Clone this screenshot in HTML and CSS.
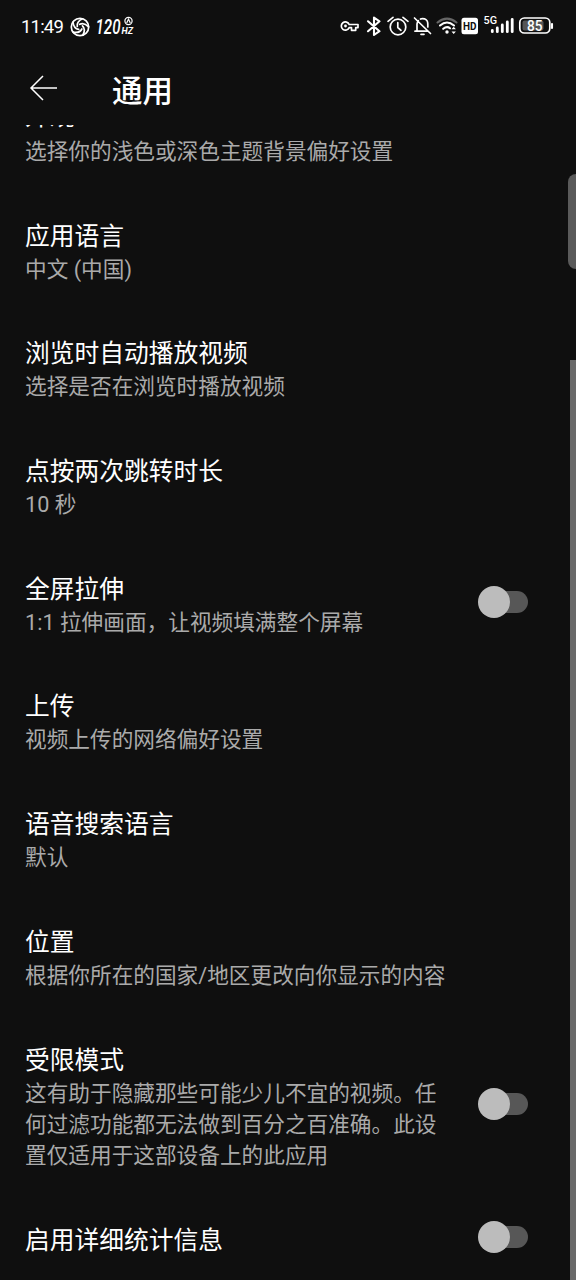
FILE: index.html
```html
<!DOCTYPE html>
<html lang="zh-CN">
<head>
<meta charset="utf-8">
<title>通用</title>
<link rel="stylesheet" href="styles.css">
</head>
<body>
<div class="screen">
  <header class="status">
    <div class="status-left">
      <span class="time">11:49</span>
      <svg class="icon aperture" width="20" height="20" viewBox="0 0 20 20">
        <circle cx="10" cy="10" r="8.700"/>
        <path d="M12.500 1.800Q6.500 4.500 7.300 9.500"/><path d="M12.500 1.800Q6.500 4.500 7.300 9.500" transform="rotate(72 10 10)"/><path d="M12.500 1.800Q6.500 4.500 7.300 9.500" transform="rotate(144 10 10)"/><path d="M12.500 1.800Q6.500 4.500 7.300 9.500" transform="rotate(216 10 10)"/><path d="M12.500 1.800Q6.500 4.500 7.300 9.500" transform="rotate(288 10 10)"/>
      </svg>
      <svg class="rate" width="40" height="22" viewBox="0 0 40 22">
        <text class="rate-num" x="0.500" y="18.500" textLength="25" lengthAdjust="spacingAndGlyphs">120</text>
        <text class="rate-unit" x="26.500" y="18.500" textLength="11.500" lengthAdjust="spacingAndGlyphs">HZ</text>
        <circle class="rate-ring" cx="33.500" cy="6" r="3.600"/>
        <path class="rate-ring" d="M31.700 8.100L33.500 4.100L35.300 8.100"/>
      </svg>
    </div>
    <svg class="icon status-right" width="216" height="24" viewBox="340 14 216 24">
      <path d="M349.200 24.500A4.100 4.100 0 1 0 349.200 27.600H351.500V30.300H355.700V27.600H358V24.500Z"/>
      <circle class="solid" cx="345.500" cy="26" r="1.400"/>
      <path class="bold" d="M368 21.300L379.500 31.200L374 35V17.500L379.500 21.300L368 31.200"/>
      <circle cx="398" cy="27" r="7.800"/>
      <path d="M397.800 22.700V27.500L401 30.300M388 21.300L393 17.300M408 21.300L403 17.300"/>
      <path d="M415 31.200H427.500M417 31.200V24Q417.200 22 418.300 20.700M420.500 19Q422 18.200 424.500 18.800Q427.800 20 427.800 24V27M414.500 18L430.500 33.500M421 34.300H424"/>
      <path class="dim" d="M437.500 22.500Q447 14.800 456.500 22.500"/>
      <path class="bold" d="M440 25.500Q447 19.500 454 25.500M443.200 28.800Q447 25.700 450 28.300"/>
      <circle class="solid" cx="447" cy="32" r="1.700"/>
      <path class="solid" d="M451.500 29.300L453.700 26.700L455.900 29.300ZM451.500 31.500L453.700 34.100L455.900 31.500Z"/>
      <rect class="solid" x="461.500" y="17.800" width="16.500" height="16.500" rx="2.500"/>
      <text class="hd" x="463" y="30" textLength="13.500" lengthAdjust="spacingAndGlyphs">HD</text>
      <text class="net" x="483.500" y="24.200" textLength="13.500" lengthAdjust="spacingAndGlyphs">5G</text>
      <path class="bars" d="M492.300 30.500V31.700M497.300 28V31.700M502.300 25V31.700M507.300 22V31.700M512.200 19.300V31.700"/>
      <rect x="519.800" y="18" width="30" height="15" rx="4.500"/>
      <rect class="charge" x="522.500" y="20.500" width="21" height="10" rx="2"/>
      <path class="bold" d="M552 24V28"/>
      <text class="pct" x="527" y="30.500" textLength="15.500" lengthAdjust="spacingAndGlyphs">85</text>
    </svg>
  </header>
  <div class="appbar">
    <svg class="back" width="30" height="28" viewBox="0 0 30 28"><path d="M28 14H2M14 2L2 14L14 26"/></svg>
    <h1 class="page-title">通用</h1>
  </div>
  <main class="settings">
    <section class="row"><div class="copy"><h2 class="title">外观</h2><p class="sub">选择你的浅色或深色主题背景偏好设置</p></div></section>
    <section class="row"><div class="copy"><h2 class="title">应用语言</h2><p class="sub">中文 (中国)</p></div></section>
    <section class="row"><div class="copy"><h2 class="title">浏览时自动播放视频</h2><p class="sub">选择是否在浏览时播放视频</p></div></section>
    <section class="row"><div class="copy"><h2 class="title">点按两次跳转时长</h2><p class="sub">10 秒</p></div></section>
    <section class="row"><div class="copy"><h2 class="title">全屏拉伸</h2><p class="sub">1:1 拉伸画面，让视频填满整个屏幕</p></div><div class="toggle"><span class="thumb"></span></div></section>
    <section class="row"><div class="copy"><h2 class="title">上传</h2><p class="sub">视频上传的网络偏好设置</p></div></section>
    <section class="row"><div class="copy"><h2 class="title">语音搜索语言</h2><p class="sub">默认</p></div></section>
    <section class="row"><div class="copy"><h2 class="title">位置</h2><p class="sub">根据你所在的国家/地区更改向你显示的内容</p></div></section>
    <section class="row"><div class="copy"><h2 class="title">受限模式</h2><p class="sub">这有助于隐藏那些可能少儿不宜的视频。任何过滤功能都无法做到百分之百准确。此设置仅适用于这部设备上的此应用</p></div><div class="toggle"><span class="thumb"></span></div></section>
    <section class="row"><div class="copy"><h2 class="title">启用详细统计信息</h2></div><div class="toggle"><span class="thumb"></span></div></section>
  </main>
  <div class="edge-handle"></div>
  <div class="scrollbar"></div>
</div>
</body>
</html>
```
FILE: styles.css
```css
* { box-sizing: border-box; }
body { margin: 0; background: #0f0f0f; }
.screen {
  position: relative;
  display: flex;
  flex-direction: column;
  width: 576px;
  height: 1280px;
  overflow: hidden;
  background: #0f0f0f;
  color: #fff;
  font-family: Roboto, "Noto Sans CJK SC", sans-serif;
}
.status {
  display: flex;
  justify-content: space-between;
  align-items: center;
  height: 52px;
  padding: 0 20px 0 20px;
  flex: none;
}
.status-left { display: flex; align-items: center; }
.time { width: 50px; margin-top: 1px; font-size: 18.500px; line-height: 24px; letter-spacing: -0.800px; padding-left: 1px; }
.icon { fill: none; stroke: #fff; stroke-width: 1.700; stroke-linecap: round; stroke-linejoin: round; }
.aperture { margin-top: 2px; }
.rate { margin: 0 0 0 5px; fill: #fff; }
.rate-num { font: italic 500 19.500px Roboto, sans-serif; }
.rate-unit { font: italic 700 9.500px Roboto, sans-serif; }
.rate-ring { fill: none; stroke: #fff; stroke-width: 1.200; }
.icon .bold { stroke-width: 2.100; }
.icon .dim { stroke: #666; stroke-width: 2; }
.icon .solid { fill: #fff; stroke: none; }
.icon text { stroke: none; fill: #fff; }
.icon .hd { fill: #0f0f0f; font: 700 11px Roboto, sans-serif; }
.net { font: 500 10.500px Roboto, sans-serif; }
.icon .bars { stroke-width: 2.800; stroke-linecap: round; }
.icon .charge { fill: #555; stroke: none; }
.pct { font: 500 14px Roboto, sans-serif; }
.appbar { display: flex; align-items: center; height: 73px; padding-left: 29px; flex: none; }
.back { margin-bottom: 1px; fill: none; stroke: #fff; stroke-width: 1.500; }
.page-title { margin: 7px 0 0 53px; font-size: 30.500px; line-height: 44px; font-weight: 500; }
.settings { flex: 1; min-height: 0; overflow: hidden; padding: 0 48px 0 25px; }
.row { display: flex; justify-content: space-between; align-items: center; margin-bottom: 50.300px; }
.row:first-child { margin-top: -25.100px; }
.copy { width: 424px; }
.title { margin: 0; padding-top: 2px; font-size: 24.750px; line-height: 34px; font-weight: 400; }
.row:first-child .title { padding: 0 0 2px; }
.sub { margin: 0; color: #aaa; font-size: 21.670px; line-height: 31.400px; font-weight: 400; }
.toggle { display: flex; align-items: center; width: 49px; height: 22px; margin-bottom: 5px; border-radius: 11px; background: #575757; }
.row:last-child .toggle { margin-bottom: 6px; }
.thumb { flex: none; width: 32px; height: 32px; margin-left: -1px; border-radius: 50%; background: #bcbcbc; }
.edge-handle { position: absolute; right: 0; top: 174px; width: 8px; height: 95px; border-radius: 9px 0 0 9px; background: #5a5a5a; }
.scrollbar { position: absolute; right: 0; top: 360px; bottom: 0; width: 6px; background: #696969; }
```
